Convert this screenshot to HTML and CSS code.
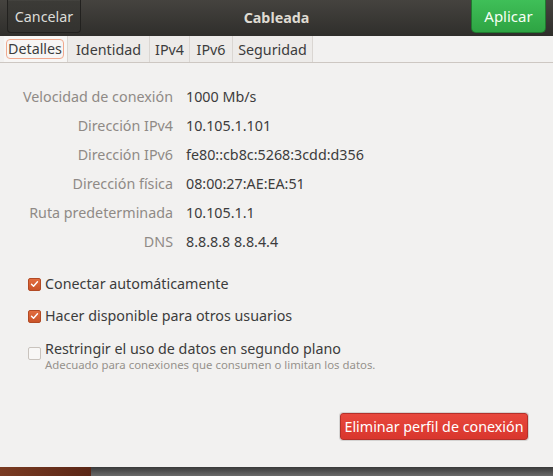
FILE: index.html
```html
<!DOCTYPE html>
<html>
<head>
<meta charset="utf-8">
<link rel="stylesheet" href="styles.css">
</head>
<body>
<div class="window">
  <header class="hb">
    <button class="btn cancel">Cancelar</button>
    <div class="title">Cableada</div>
    <button class="btn apply">Aplicar</button>
  </header>
  <nav class="tabs">
    <div class="tab t1 active"><span class="focus">Detalles</span></div>
    <div class="tab t2">Identidad</div>
    <div class="tab t3">IPv4</div>
    <div class="tab t4">IPv6</div>
    <div class="tab t5">Seguridad</div>
  </nav>
  <main class="content">
    <div class="details">
      <div class="lbl">Velocidad de conexión</div><div class="val">1000 Mb/s</div>
      <div class="lbl">Dirección IPv4</div><div class="val">10.105.1.101</div>
      <div class="lbl">Dirección IPv6</div><div class="val">fe80::cb8c:5268:3cdd:d356</div>
      <div class="lbl">Dirección física</div><div class="val">08:00:27:AE:EA:51</div>
      <div class="lbl">Ruta predeterminada</div><div class="val">10.105.1.1</div>
      <div class="lbl">DNS</div><div class="val">8.8.8.8 8.8.4.4</div>
    </div>
    <div class="checks">
      <div class="chk"><span class="box on"><svg viewBox="0 0 14 14" width="14" height="14"><path d="M3.2 7.2 L5.8 9.8 L10.8 4.2" fill="none" stroke="#fff" stroke-width="1.8" stroke-linecap="round" stroke-linejoin="round"/></svg></span><span class="ctext">Conectar automáticamente</span></div>
      <div class="chk"><span class="box on"><svg viewBox="0 0 14 14" width="14" height="14"><path d="M3.2 7.2 L5.8 9.8 L10.8 4.2" fill="none" stroke="#fff" stroke-width="1.8" stroke-linecap="round" stroke-linejoin="round"/></svg></span><span class="ctext">Hacer disponible para otros usuarios</span></div>
      <div class="chk multi"><span class="box"></span><div class="cwrap"><span class="ctext">Restringir el uso de datos en segundo plano</span><span class="sub">Adecuado para conexiones que consumen o limitan los datos.</span></div></div>
    </div>
    <div class="actions">
      <button class="btn danger">Eliminar perfil de conexión</button>
    </div>
  </main>
</div>
<div class="desktop">
  <div class="d1"></div>
  <div class="d2"></div>
</div>
</body>
</html>
```
FILE: styles.css
```css
* { box-sizing: border-box; }
html, body { margin: 0; padding: 0; }
body {
  width: 553px; height: 476px; overflow: hidden;
  font-family: "Noto Sans", "DejaVu Sans", sans-serif;
  font-size: 14.3px;
  background: #555;
  display: flex; flex-direction: column;
}
.window { height: 467px; background: #f2f1f0; display: flex; flex-direction: column; }
.hb {
  height: 36px; flex: none;
  background: linear-gradient(#45433f, #2f2e2b);
  display: flex; align-items: flex-start; justify-content: space-between;
  padding: 0 7px 0 7px;
  position: relative;
}
.btn { font-family: inherit; font-size: 14.3px; cursor: default; }
.cancel {
  width: 74px; height: 33px;
  background: linear-gradient(#3c3b37, #33322f);
  border: 1px solid #22211f; border-top: none;
  border-radius: 0 0 4px 4px;
  color: #dcdcd8;
  box-shadow: inset 0 1px rgba(255,255,255,0.04);
}
.title {
  position: absolute; left: 0; right: 0; top: 0; height: 34px;
  display: flex; align-items: center; justify-content: center;
  color: #dfdbd2; font-weight: bold; font-size: 14.3px;
  pointer-events: none;
}
.apply {
  width: 75px; height: 33px;
  background: linear-gradient(#3fbf58, #2ea443);
  border: 1px solid #1f7a2f; border-top: none;
  border-radius: 0 0 5px 5px;
  color: #f6fff4;
  font-size: 15px;
}
.tabs {
  height: 27px; flex: none;
  display: flex; align-items: stretch;
  border-bottom: 1px solid #cdc7c2;
  padding-left: 4px;
  background: #f2f1f0;
}
.tab {
  display: flex; align-items: center; justify-content: center;
  color: #3c3c3c; font-size: 14.3px; white-space: nowrap;
  border-right: 1px solid #dad6d2;
  background: #edebe9;
}
.t1 { width: 64px; }
.t2 { width: 82px; }
.t3 { width: 40px; }
.t4 { width: 43px; }
.t5 { width: 80px; }
.tab.active { background: #f7f6f5; justify-content: flex-start; padding-left: 2px; }
.focus {
  border: 1px solid #f0a98f; border-radius: 4px;
  padding: 0 1px; line-height: 18px;
}
.content { flex: 1; display: flex; flex-direction: column; }
.details {
  display: grid; grid-template-columns: 173px auto; column-gap: 13px;
  margin-top: 19px;
}
.lbl { text-align: right; color: #8f8a86; height: 29px; line-height: 29px; white-space: nowrap; }
.val { color: #3c3c3c; height: 29px; line-height: 29px; white-space: nowrap; }
.checks { margin-top: 12px; padding-left: 28px; display: flex; flex-direction: column; }
.chk { display: flex; align-items: center; height: 32px; color: #3c3c3c; }
.chk.multi { align-items: flex-start; height: auto; padding-top: 7px; }
.box {
  width: 13px; height: 13px; border-radius: 2px; flex: none;
  border: 1px solid #c9c3bd; background: #f8f7f6;
  margin-right: 4px; display: flex; align-items: center; justify-content: center;
}
.box.on { background: linear-gradient(#e26d3f, #ca5328); border-color: #b24a24; }
.box svg { width: 12px; height: 12px; }
.multi .box { margin-top: 8px; }
.cwrap { display: flex; flex-direction: column; }
.ctext { line-height: 20px; }
.sub { font-size: 11.4px; color: #96918c; line-height: 12px; }
.actions { display: flex; justify-content: flex-end; padding-right: 25px; margin-top: 42px; }
.danger {
  height: 27px; width: 188px; padding: 0;
  background: linear-gradient(#e8483d, #d9362d);
  border: 1px solid #b5302a; border-radius: 3px;
  color: #fff;
  box-shadow: 0 0 0 1px rgba(0,0,0,0.12);
}
.desktop { flex: 1; display: flex; }
.d1 { width: 91px; background: linear-gradient(90deg, #7a3b22, #5a2616); }
.d2 { flex: 1; background: linear-gradient(#3a3a3a, #6a6a6a); }
```
